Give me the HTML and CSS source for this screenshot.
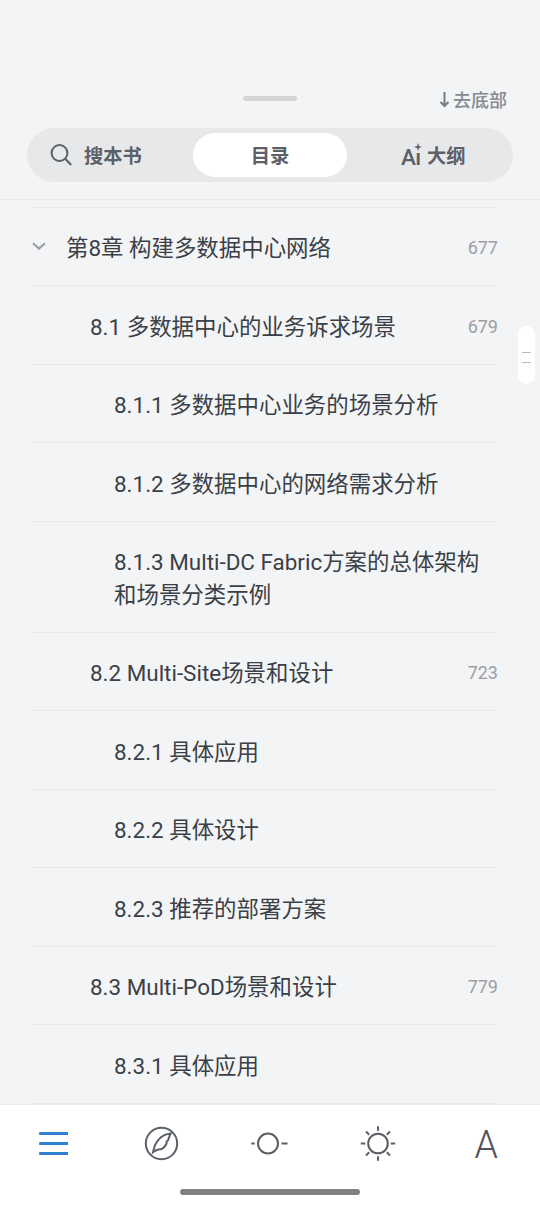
FILE: index.html
```html
<!DOCTYPE html>
<html lang="zh-CN">
<head>
    <meta charset="UTF-8">
    <meta name="viewport" content="width=device-width, initial-scale=1.0">
    <title>目录</title>
    <link rel="stylesheet" href="styles.css">
</head>
<body>
    <div class="header">
        <div class="drag-handle"></div>
        <div class="to-bottom">
            <svg width="10" height="16" viewBox="0 0 10 16">
                <path d="M5.5 -1V13M1.5 9L5.5 13L9.5 9"/>
            </svg>
            <span>去底部</span>
        </div>
        <div class="tabs">
            <div class="tab tab-search">
                <svg width="24" height="24" viewBox="0 0 24 24">
                    <circle cx="9.5" cy="10" r="7.9"/>
                    <path d="M15.2 15.7L21.2 22"/>
                </svg>
                <span>搜本书</span>
            </div>
            <div class="tab tab-active">目录</div>
            <div class="tab tab-outline">
                <span class="ai-icon">
                    <span>Aı</span>
                    <svg width="8" height="8" viewBox="0 0 8 8">
                        <path d="M4 0L5 3L8 4L5 5L4 8L3 5L0 4L3 3Z"/>
                    </svg>
                </span>
                <span>大纲</span>
            </div>
        </div>
    </div>

    <div class="toc">
        <ul class="toc-list">
            <li class="level-1">
                <svg class="arrow" width="14" height="9" viewBox="0 0 14 9">
                    <path d="M1 1.3L7 6.6L13 1.3"/>
                </svg>
                <span class="title">第8章 构建多数据中心网络</span><span class="page">677</span>
            </li>
            <li class="level-2"><span class="title">8.1 多数据中心的业务诉求场景</span><span class="page">679</span></li>
            <li class="level-3"><span class="title">8.1.1 多数据中心业务的场景分析</span></li>
            <li class="level-3"><span class="title">8.1.2 多数据中心的网络需求分析</span></li>
            <li class="level-3"><span class="title">8.1.3 Multi-DC Fabric方案的总体架构和场景分类示例</span></li>
            <li class="level-2"><span class="title">8.2 Multi-Site场景和设计</span><span class="page">723</span></li>
            <li class="level-3"><span class="title">8.2.1 具体应用</span></li>
            <li class="level-3"><span class="title">8.2.2 具体设计</span></li>
            <li class="level-3"><span class="title">8.2.3 推荐的部署方案</span></li>
            <li class="level-2"><span class="title">8.3 Multi-PoD场景和设计</span><span class="page">779</span></li>
            <li class="level-3"><span class="title">8.3.1 具体应用</span></li>
        </ul>
        <div class="scroll-thumb"></div>
    </div>

    <div class="footer">
        <div class="nav">
            <div class="nav-item nav-active">
                <svg width="36" height="36" viewBox="0 0 36 36">
                    <path d="M3.2 7.5H32M3.2 17.5H32M3.2 27.5H32"/>
                </svg>
            </div>
            <div class="nav-item">
                <svg width="36" height="36" viewBox="0 0 36 36">
                    <circle cx="17.5" cy="17.5" r="15.7"/>
                    <path d="M9 26.3C10.5 17 16 8.5 26.8 7.5C25.3 9.8 24.8 12.3 24 14.5L22.5 15.7L22.6 17.5C20.5 21.8 18 23.6 14.5 23.6C12.5 24 10.5 25 9 26.3Z"/>
                </svg>
            </div>
            <div class="nav-item">
                <svg width="36" height="36" viewBox="0 0 36 36">
                    <circle cx="16" cy="17.5" r="10"/>
                    <path d="M-0.7 17.5H2.7M29.5 17.5H35.5"/>
                </svg>
            </div>
            <div class="nav-item">
                <svg width="36" height="36" viewBox="0 0 36 36">
                    <circle cx="18" cy="17.5" r="9.8"/>
                    <path d="M18 0.3V4.8M18 30.2V34.7M0.8 17.5H5.3M30.7 17.5H35.2M6 5.5L9.2 8.7M26.8 26.3L30 29.5M6 29.5L9.2 26.3M26.8 8.7L30 5.5"/>
                </svg>
            </div>
            <div class="nav-item nav-font"><span>A</span></div>
        </div>
        <div class="home-bar"></div>
    </div>
</body>
</html>
```
FILE: styles.css
```css
* {
    box-sizing: border-box;
}

body {
    margin: 0;
    height: 1206px;
    display: flex;
    flex-direction: column;
    overflow: hidden;
    background-color: #f3f4f6;
    color: #3b3f46;
    font-family: Roboto, "Noto Sans CJK SC", sans-serif;
}

svg {
    display: block;
    overflow: visible;
    fill: none;
    stroke: #5b5f67;
    stroke-width: 2;
}

.header {
    position: relative;
    height: 200px;
    flex-shrink: 0;
    padding: 96px 27px 0;
    border-bottom: 1px solid #e9eaec;
}

.drag-handle {
    width: 54px;
    height: 5px;
    margin: 0 auto;
    border-radius: 3px;
    background-color: #d4d5d7;
}

.to-bottom {
    position: absolute;
    top: 88px;
    right: 33px;
    display: flex;
    align-items: center;
    gap: 4px;
    font-size: 18px;
    line-height: 26px;
    font-weight: 500;
    color: #858991;
}

.to-bottom svg {
    stroke: #777b83;
}

.tabs {
    display: flex;
    height: 54px;
    margin-top: 27px;
    padding: 5px;
    border-radius: 27px;
    background-color: #e7e8ea;
}

.tab {
    flex: 1;
    display: flex;
    align-items: center;
    justify-content: center;
    font-size: 19.3px;
    font-weight: 700;
    color: #5c6069;
}

.tab-search {
    flex: 0 0 161px;
    justify-content: flex-start;
    padding-left: 18px;
    gap: 10px;
}

.tab-active {
    flex: 0 0 154px;
    border-radius: 23px;
    background-color: #fff;
}

.tab-outline {
    justify-content: flex-start;
    gap: 6px;
    padding-left: 54px;
}

.ai-icon {
    position: relative;
    width: 20px;
    padding-top: 3px;
    font-size: 22.5px;
    font-weight: 500;
    line-height: 24px;
    letter-spacing: -0.6px;
}

.ai-icon svg {
    position: absolute;
    top: 1px;
    right: -1px;
    fill: #5b5f67;
    stroke: none;
}

.toc {
    position: relative;
    flex: 1;
    min-height: 0;
    padding: 7px 42px 0 30px;
}

.toc-list {
    margin: 0;
    padding: 0;
    list-style: none;
    border-top: 1px solid #e9eaec;
}

.toc-list li {
    position: relative;
    display: flex;
    padding: 24.3px 0 20.7px;
    border-bottom: 1px solid #e8e9eb;
    font-size: 22.45px;
    line-height: 32.5px;
}

.toc-list .level-1 {
    padding-left: 36px;
}

.toc-list .level-2 {
    padding-left: 60px;
}

.toc-list .level-3 {
    padding-left: 84px;
}

.title {
    flex: 1;
}

.page {
    font-size: 18px;
    color: #9b9ea5;
}

.arrow {
    position: absolute;
    left: 2px;
    top: 34px;
    stroke: #989ba1;
}

.scroll-thumb {
    position: absolute;
    top: 126px;
    right: 5px;
    width: 17px;
    height: 58px;
    border-radius: 9px;
    background-color: #fff;
}

.scroll-thumb::after {
    content: "";
    position: absolute;
    top: 26px;
    left: 4px;
    width: 9px;
    height: 9px;
    border: solid #b9babd;
    border-width: 1px 0;
}

.footer {
    position: relative;
    height: 102px;
    flex-shrink: 0;
    padding-top: 21px;
    border-top: 1px solid #e9eaec;
    background-color: #fff;
}

.nav {
    display: flex;
}

.nav-item {
    flex: 1;
    display: flex;
    justify-content: center;
}

.nav-active svg {
    stroke: #2f80cf;
    stroke-width: 2.8;
}

.nav-font {
    font-size: 39px;
    line-height: 38px;
    font-weight: 300;
    color: #4f535b;
}

.nav-font span {
    transform: scaleX(0.96);
}

.home-bar {
    width: 180px;
    height: 6px;
    margin: 25px auto 0;
    border-radius: 3px;
    background-color: #808080;
}
```
